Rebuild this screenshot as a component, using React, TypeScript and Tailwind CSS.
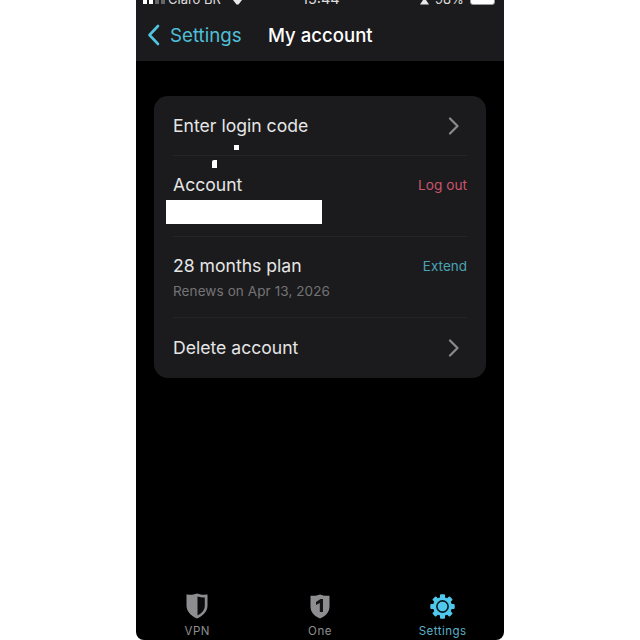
const Chevron = () => (
  <svg width="12" height="18" viewBox="0 0 12 18" fill="none" stroke="#8a8a8c" strokeWidth="2.2" strokeLinecap="round" strokeLinejoin="round">
    <path d="M2 1.5 L9.5 9 L2 16.5" />
  </svg>
);

const VpnShield = () => (
  <svg width="22" height="26" viewBox="0 0 22 26">
    <path d="M11 0.5 C14 1.6 17.8 2 21.5 1.6 L21.5 12.5 C21.5 18.5 17 23 11 25.5 C5 23 0.5 18.5 0.5 12.5 L0.5 1.6 C4.2 2 8 1.6 11 0.5 Z" fill="#8e8e90" />
    <path d="M11.5 3.5 C13.8 4.3 16.5 4.6 18.8 4.5 L18.8 12.5 C18.8 17 15.8 20.5 11.5 22.4 Z" fill="#0c0c0c" />
  </svg>
);

const OneShield = () => (
  <svg width="20" height="25" viewBox="0 0 20 25">
    <path d="M10 0.5 C12.5 1.5 15.8 2 19.5 1.7 L19.5 12.5 C19.5 18 15.5 22.3 10 24.5 C4.5 22.3 0.5 18 0.5 12.5 L0.5 1.7 C4.2 2 7.5 1.5 10 0.5 Z" fill="#8e8e90" />
    <path d="M6 8 L10.5 5 L13 5 L13 18 L9.8 18 L9.8 9 L6 11 Z" fill="#141414" />
  </svg>
);

const Gear = () => {
  const teeth = [0, 45, 90, 135, 180, 225, 270, 315];
  return (
    <svg width="25" height="25" viewBox="0 0 25 25">
      {teeth.map((a) => (
        <rect key={a} x="10" y="0.3" width="5" height="5" rx="1" fill="#4fc8ee" transform={`rotate(${a} 12.5 12.5)`} />
      ))}
      <circle cx="12.5" cy="12.5" r="9.5" fill="#4fc8ee" />
      <circle cx="12.5" cy="12.5" r="6.4" fill="#0a1a20" />
      <circle cx="12.5" cy="12.5" r="4.8" fill="#4fc8ee" />
    </svg>
  );
};

export default function App() {
  return (
    <div className="w-[640px] h-[640px] bg-white flex justify-center overflow-hidden" style={{ fontFamily: "Inter, 'Liberation Sans', sans-serif" }}>
      <div className="w-[368px] h-[640px] bg-black flex flex-col rounded-b-lg overflow-hidden">
        <div className="h-[61px] shrink-0 bg-[#1b1b1d] flex flex-col relative">
          <div className="h-[6px] relative overflow-hidden text-[13px] text-[#dcdcdc]">
            <div className="absolute left-[7px] top-0 flex items-start gap-[2px]">
              <span className="w-[4px] h-[4px] bg-white" />
              <span className="w-[4px] h-[4px] bg-white" />
              <span className="w-[4px] h-[4px] bg-[#666]" />
              <span className="w-[4px] h-[4px] bg-[#666]" />
            </div>
            <span className="absolute left-[32px] -top-[9px] leading-[16px] whitespace-nowrap">Claro BR</span>
            <svg className="absolute left-[97px] top-0" width="9" height="5" viewBox="0 0 9 5">
              <path d="M0 0 L9 0 L5.5 4.5 L3.5 4.5 Z" fill="#e8e8e8" />
            </svg>
            <span className="absolute left-[166px] -top-[9px] text-[14.5px] leading-[16px] whitespace-nowrap">15:44</span>
            <svg className="absolute left-[284px] top-0" width="9" height="5" viewBox="0 0 9 5">
              <path d="M3 0 L6 0 L9 4.5 L0 4.5 Z" fill="#e8e8e8" />
            </svg>
            <span className="absolute left-[299px] -top-[9px] leading-[16px] whitespace-nowrap">98%</span>
            <span className="absolute left-[334px] -top-[6px] w-[25px] h-[11px] rounded-[3px] border border-[#999] bg-white" />
          </div>
          <div className="flex items-center flex-1 pt-[3px]">
            <div className="flex items-center ml-[11px] w-[121px] gap-[10px]">
              <svg width="13" height="22" viewBox="0 0 13 22" fill="none" stroke="#4fc3e0" strokeWidth="2.6" strokeLinecap="round" strokeLinejoin="round">
                <path d="M11 2 L2.5 11 L11 20" />
              </svg>
              <span className="text-[18.7px] leading-[24px] mt-[1px] text-[#4fbfd8]">Settings</span>
            </div>
            <span className="text-[18.6px] leading-[24px] font-medium text-white whitespace-nowrap">My account</span>
          </div>
        </div>

        <div className="flex-1 px-[18px] pt-[35px]">
          <div className="w-[332px] bg-[#1b1b1d] rounded-[14px] pl-[19px] pr-[19px] relative">
            <div className="h-[60px] flex items-center justify-between border-b border-[#242426]">
              <span className="text-[17.6px] mt-[2px] text-[#e6e6e6]">Enter login code</span>
              <span className="mr-[7px] flex"><Chevron /></span>
            </div>
            <div className="h-[81px] border-b border-[#242426] relative flex justify-between items-start pt-[17px]">
              <span className="text-[17.6px] leading-[24px] text-[#e6e6e6]">Account</span>
              <span className="text-[13.7px] leading-[24px] text-[#c9546c]">Log out</span>
              <span className="absolute -left-[7px] top-[44px] w-[156px] h-[24px] bg-white" />
              <span className="absolute left-[61px] -top-[11px] w-[5px] h-[5px] bg-white" />
              <span className="absolute left-[39px] top-[4px] w-[5px] h-[8px] bg-white rounded-tl-[2px]" />
            </div>
            <div className="h-[81px] border-b border-[#242426] flex justify-between items-start pt-[17px]">
              <div className="flex flex-col">
                <span className="text-[17.6px] leading-[24px] text-[#e6e6e6]">28 months plan</span>
                <span className="text-[13.5px] leading-[20px] mt-[3px] tracking-[0.1px] text-[#747476]">Renews on Apr 13, 2026</span>
              </div>
              <span className="text-[13.5px] leading-[24px] text-[#4aa3b3]">Extend</span>
            </div>
            <div className="h-[60px] flex items-center justify-between">
              <span className="text-[17.6px] text-[#e6e6e6]">Delete account</span>
              <span className="mr-[7px] flex"><Chevron /></span>
            </div>
          </div>
        </div>

        <div className="h-[47px] shrink-0 grid grid-cols-3 text-[11.5px] leading-[14px] tracking-[0.5px]">
          <div className="flex flex-col items-center">
            <span className="h-[26px] flex items-center"><VpnShield /></span>
            <span className="text-[#8e8e90] mt-[5px]">VPN</span>
          </div>
          <div className="flex flex-col items-center">
            <span className="h-[26px] flex items-center"><OneShield /></span>
            <span className="text-[#8e8e90] mt-[5px]">One</span>
          </div>
          <div className="flex flex-col items-center">
            <span className="h-[26px] flex items-center"><Gear /></span>
            <span className="text-[#5fb0c6] mt-[5px]">Settings</span>
          </div>
        </div>
      </div>
    </div>
  );
}
